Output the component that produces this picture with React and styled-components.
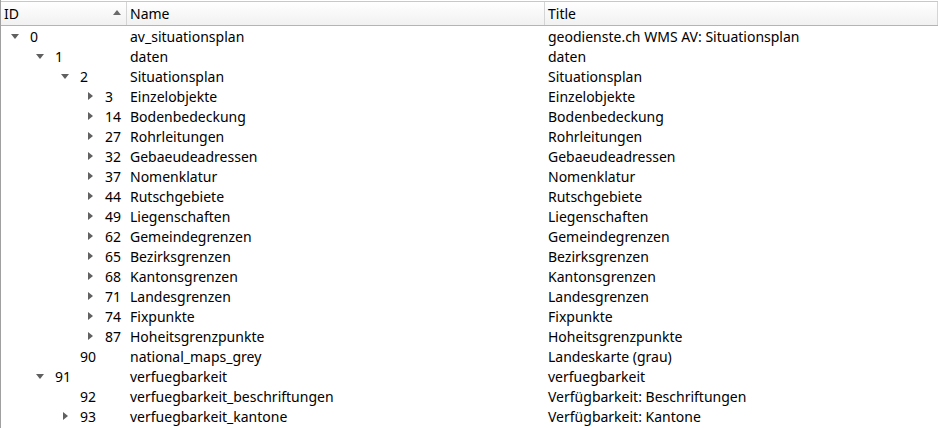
import React from "react";
import styled, { createGlobalStyle } from "styled-components";

const GlobalStyle = createGlobalStyle`
  html, body {
    margin: 0;
    padding: 0;
    background: #ffffff;
  }
  body {
    font-family: "Noto Sans", "Open Sans", sans-serif;
  }
`;

const COLS = "126px 418px 1fr";

const Tree = styled.div`
  width: 938px;
  height: 428px;
  box-sizing: border-box;
  border-left: 1px solid #a0a0a0;
  overflow: hidden;
  font-size: 14px;
  color: #000;
`;

const Header = styled.div`
  display: grid;
  grid-template-columns: ${COLS};
  height: 25px;
  margin-top: 1px;
  box-sizing: border-box;
  border-top: 1px solid #c8c8c8;
  border-bottom: 1px solid #b4b4b4;
  background: linear-gradient(#ffffff, #f1f1f1);
`;

const HeaderCell = styled.div`
  display: flex;
  align-items: center;
  justify-content: space-between;
  padding: 0 4px 0 3px;
  border-right: 1px solid #d5d5d5;
  line-height: 1;
`;

const SortArrow = styled.span`
  width: 0;
  height: 0;
  border-left: 4px solid transparent;
  border-right: 4px solid transparent;
  border-bottom: 5px solid #6a6a6a;
  margin-right: 1px;
  margin-bottom: 3px;
`;

const Row = styled.div`
  display: grid;
  grid-template-columns: ${COLS};
  height: 20px;
  align-items: center;
  white-space: nowrap;
`;

const IdCell = styled.div`
  display: flex;
  align-items: center;
  padding-left: ${(p) => 10 + p.$level * 25}px;
`;

const Toggle = styled.span`
  width: 8px;
  height: 8px;
  margin-right: 11px;
  flex: none;
  display: flex;
  align-items: center;
  justify-content: center;
  &::before {
    content: "";
    width: 0;
    height: 0;
    ${(p) =>
      p.$state === "open"
        ? `border-left: 4px solid transparent;
           border-right: 4px solid transparent;
           border-top: 5px solid #606060;`
        : p.$state === "closed"
        ? `border-top: 4px solid transparent;
           border-bottom: 4px solid transparent;
           border-left: 5px solid #606060;`
        : ""}
  }
`;

const TextCell = styled.div`
  padding-left: 3px;
  overflow: hidden;
`;

const rows = [
  [0, "open", 0, "av_situationsplan", "geodienste.ch WMS AV: Situationsplan"],
  [1, "open", 1, "daten", "daten"],
  [2, "open", 2, "Situationsplan", "Situationsplan"],
  [3, "closed", 3, "Einzelobjekte", "Einzelobjekte"],
  [3, "closed", 14, "Bodenbedeckung", "Bodenbedeckung"],
  [3, "closed", 27, "Rohrleitungen", "Rohrleitungen"],
  [3, "closed", 32, "Gebaeudeadressen", "Gebaeudeadressen"],
  [3, "closed", 37, "Nomenklatur", "Nomenklatur"],
  [3, "closed", 44, "Rutschgebiete", "Rutschgebiete"],
  [3, "closed", 49, "Liegenschaften", "Liegenschaften"],
  [3, "closed", 62, "Gemeindegrenzen", "Gemeindegrenzen"],
  [3, "closed", 65, "Bezirksgrenzen", "Bezirksgrenzen"],
  [3, "closed", 68, "Kantonsgrenzen", "Kantonsgrenzen"],
  [3, "closed", 71, "Landesgrenzen", "Landesgrenzen"],
  [3, "closed", 74, "Fixpunkte", "Fixpunkte"],
  [3, "closed", 87, "Hoheitsgrenzpunkte", "Hoheitsgrenzpunkte"],
  [2, "leaf", 90, "national_maps_grey", "Landeskarte (grau)"],
  [1, "open", 91, "verfuegbarkeit", "verfuegbarkeit"],
  [2, "leaf", 92, "verfuegbarkeit_beschriftungen", "Verfügbarkeit: Beschriftungen"],
  [2, "closed", 93, "verfuegbarkeit_kantone", "Verfügbarkeit: Kantone"],
];

export default function App() {
  return (
    <>
      <GlobalStyle />
      <Tree>
        <Header>
          <HeaderCell>
            ID
            <SortArrow />
          </HeaderCell>
          <HeaderCell>Name</HeaderCell>
          <HeaderCell>Title</HeaderCell>
        </Header>
        {rows.map(([level, state, id, name, title]) => (
          <Row key={id}>
            <IdCell $level={level}>
              <Toggle $state={state} />
              {id}
            </IdCell>
            <TextCell>{name}</TextCell>
            <TextCell>{title}</TextCell>
          </Row>
        ))}
      </Tree>
    </>
  );
}
